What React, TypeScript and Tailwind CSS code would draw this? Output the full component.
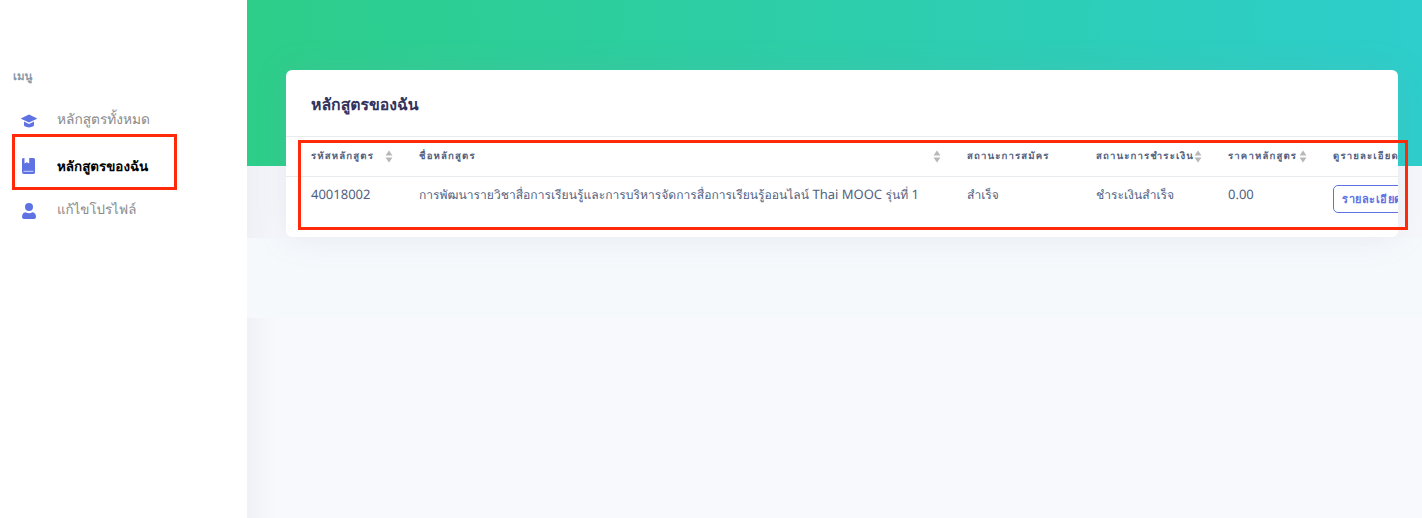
const font = { fontFamily: '"Noto Sans", "Open Sans", sans-serif' };

function CapIcon() {
  return (
    <svg width="16" height="14" viewBox="0 0 16 14" fill="#5e72e4">
      <path d="M8 0.5 L15.8 4.3 Q16 4.8 15.6 5.1 L8 8.6 L0.4 5.1 Q0 4.8 0.2 4.3 Z" />
      <path d="M3 7.6 L8 9.9 L13 7.6 V11 Q13 13 8 13.4 Q3 13 3 11 Z" />
    </svg>
  );
}

function BookIcon() {
  return (
    <svg width="13" height="16" viewBox="0 0 13 16" fill="#5e72e4">
      <path d="M1.5 0 H2.5 V5.5 L4.8 4.2 L7.2 5.5 V0 H11.5 Q13 0 13 1.5 V14.6 Q13 16 11.5 16 H2 Q0 16 0 14 V1.5 Q0 0 1.5 0 Z" />
      <rect x="1.5" y="12.8" width="10" height="1" fill="#cdd3f7" />
    </svg>
  );
}

function UserIcon() {
  return (
    <svg width="14" height="16" viewBox="0 0 14 16" fill="#5e72e4">
      <circle cx="7" cy="4" r="4" />
      <path d="M3.5 9.3 Q7 11 10.5 9.3 Q14 10 14 14 Q14 16 12 16 H2 Q0 16 0 14 Q0 10 3.5 9.3 Z" />
    </svg>
  );
}

function SortIcon() {
  return (
    <svg width="8" height="13" viewBox="0 0 8 13" className="shrink-0" fill="#b8b8b8">
      <path d="M4 0.5 L7.5 5.5 H0.5 Z" />
      <path d="M4 12.5 L0.5 7.5 H7.5 Z" />
    </svg>
  );
}

function NavItem({ icon, label, className }: { icon: React.ReactNode; label: string; className: string }) {
  return (
    <div className="flex h-[45px] items-center">
      <span className="flex w-[57px] justify-center">
        <span className="flex w-[16px] justify-center">{icon}</span>
      </span>
      <span className={className}>{label}</span>
    </div>
  );
}

function Th({ label, sort, className }: { label: string; sort?: boolean; className: string }) {
  return (
    <th className={`h-[40px] border-y border-[#e9ecef] p-0 text-left align-middle ${className}`}>
      <div className="flex items-center justify-between pr-[14px] text-[9.6px] font-bold tracking-[1.15px] whitespace-nowrap text-[#525f7f]">
        <span>{label}</span>
        {sort && <SortIcon />}
      </div>
    </th>
  );
}

export default function App() {
  return (
    <div className="relative flex h-[518px] w-[1422px] overflow-hidden bg-white [text-rendering:geometricPrecision]" style={font}>
      <aside className="w-[247px] shrink-0 bg-white pt-[68px]">
        <div className="pl-[13px] text-[11.5px] font-bold text-[#8898aa]">เมนู</div>
        <nav className="mt-[13px]">
          <NavItem icon={<CapIcon />} label="หลักสูตรทั้งหมด" className="text-[13.7px] text-[#8a8a8a]" />
          <NavItem icon={<BookIcon />} label="หลักสูตรของฉัน" className="text-[13.4px] font-semibold text-black" />
          <NavItem icon={<UserIcon />} label="แก้ไขโปรไฟล์" className="-mt-[2px] text-[13.3px] text-[#8a8a8a]" />
        </nav>
      </aside>

      <main className="relative min-w-0 flex-1 bg-[#f8f9fc]">
        <div className="h-[166px] bg-[linear-gradient(87deg,#2dce89,#2dcecc)]" />
        <div className="h-[72px] bg-gradient-to-r from-[#eef0f5] to-[#f6f7fb] to-[28px]" />
        <div className="h-[80px] bg-[#f6f9fc]" />
        <div className="h-[200px] bg-gradient-to-r from-[#f0f1f6] to-[#f8f9fc] to-[28px]" />

        <section className="absolute top-[70px] left-[39px] w-[1112px] overflow-hidden rounded-md bg-white shadow-[0_0_32px_rgba(136,152,170,0.15)]">
          <h2 className="flex h-[66px] items-center pt-[3px] pl-[25px] text-[15.8px] font-bold text-[#32325d]">หลักสูตรของฉัน</h2>
          <table className="w-[1200px] table-fixed border-collapse">
            <thead>
              <tr>
                <Th label="รหัสหลักสูตร" sort className="w-[121px] pl-[25px]" />
                <Th label="ชื่อหลักสูตร" sort className="w-[548px] pl-[12px]" />
                <Th label="สถานะการสมัคร" className="w-[129px] pl-[12px]" />
                <Th label="สถานะการชำระเงิน" sort className="w-[132px] pl-[12px]" />
                <Th label="ราคาหลักสูตร" sort className="w-[105px] pl-[12px]" />
                <Th label="ดูรายละเอียด" className="pl-[12px]" />
              </tr>
            </thead>
            <tbody className="text-[13px] text-[#525f7f]">
              <tr className="h-[60px] align-top">
                <td className="pt-[8px] pl-[25px]">40018002</td>
                <td className="pt-[8px] pl-[12px] whitespace-nowrap">
                  <span className="text-[12.1px]">การพัฒนารายวิชาสื่อการเรียนรู้และการบริหารจัดการสื่อการเรียนรู้ออนไลน์</span> Thai MOOC <span className="text-[12.1px]">รุ่นที่</span> 1
                </td>
                <td className="pt-[9px] pl-[12px] text-[12.1px]">สำเร็จ</td>
                <td className="pt-[9px] pl-[12px] text-[12.1px]">ชำระเงินสำเร็จ</td>
                <td className="pt-[8px] pl-[12px]">0.00</td>
                <td className="pt-[8px] pl-[12px]">
                  <button className="h-[28px] rounded-[5px] border border-[#5e72e4] px-[8px] text-[11px] font-semibold tracking-[0.5px] whitespace-nowrap text-[#5e72e4]">รายละเอียด</button>
                </td>
              </tr>
            </tbody>
          </table>
        </section>
      </main>

      {/* red annotation boxes */}
      <div className="absolute top-[134px] left-[12px] h-[56px] w-[165px] border-[3px] border-[#ff2a0a]" />
      <div className="absolute top-[140px] left-[298px] h-[90px] w-[1110px] border-[3px] border-[#ff2a0a]" />
    </div>
  );
}
